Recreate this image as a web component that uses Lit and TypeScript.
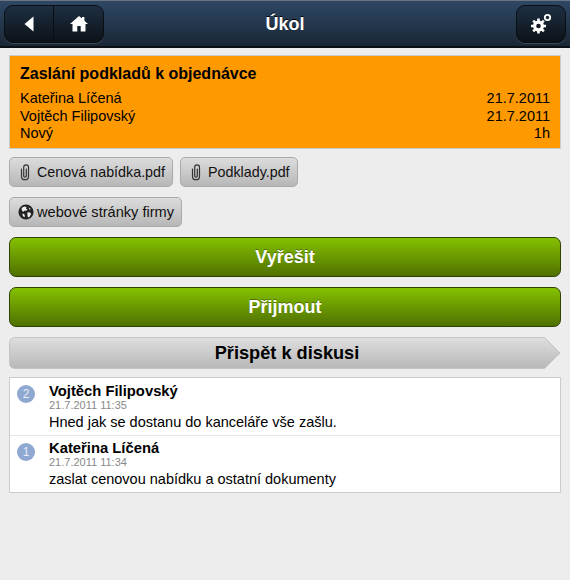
import { LitElement, html, css, svg } from "lit";
import { customElement } from "lit/decorators.js";

const clip = svg`<svg class="ic" width="14" height="18" viewBox="0 0 14 18"><path d="M3.500 6v7.400c0 4.400 7 4.400 7 0V4.200c0-3.200-4.800-3.200-4.800 0v8.800c0 1.500 2.600 1.500 2.600 0V6" fill="none" stroke="#333" stroke-width="1.200" stroke-linecap="round"/></svg>`;
const globe = svg`<svg class="ic" width="16" height="16" viewBox="0 0 18 18"><circle cx="9" cy="9" r="8.500" fill="#222"/><path d="M4 4.500l3-1.600 2.600.4-.6 1.800 1.700 1-1.600 1.600-2.400-.2-.6 1.600-1.600-1.400zM10.600 9.400l3 .2 1.200 1.600-2 3.400-1.600.6-.6-3zM12 3.600l2.400 2-1.400.8zM5 10.600l2.200 1 .6 2.400-1 1-1.600-2z" fill="#eee"/></svg>`;

@customElement("app-root")
export class AppRoot extends LitElement {
  static styles = css`
    :host { display: block; width: 570px; height: 580px; overflow: hidden; background: #ededed; font-family: "Liberation Sans", Arial, sans-serif; color: #000; }
    .hdr { height: 48px; box-sizing: border-box; display: flex; align-items: center; justify-content: space-between; padding: 1px 4px 0; border-top: 1px solid #6b7480; border-bottom: 2px solid #0c1014; background: linear-gradient(#2e4764, #1a2735); position: relative; }
    .hdr h1 { position: absolute; left: 0; right: 0; top: 13px; margin: 0; text-align: center; font-size: 18px; line-height: 20px; font-weight: bold; color: #fff; text-shadow: 0 -1px 0 #000; }
    .grp { display: flex; height: 38px; border: 1px solid #0b0f14; border-radius: 9px; background: linear-gradient(#1e2f42, #0c1218); box-shadow: 0 1px 0 #3b4b5d; box-sizing: border-box; position: relative; }
    .grp div { display: flex; align-items: center; justify-content: center; height: 100%; }
    .back { width: 48px; border-right: 1px solid #0a0d11; }
    .home { width: 49px; }
    .set { width: 48px; }
    .body { padding: 7px 9px 0; display: flex; flex-direction: column; }
    .info { height: 94px; box-sizing: border-box; border: 1px solid #ccc; background: #ff9900; padding: 9px 10px; font-size: 14.500px; line-height: 17.500px; }
    .info h2 { margin: 0 0 7px; font-size: 16px; line-height: 18px; font-weight: bold; }
    .row { display: flex; justify-content: space-between; }
    .atts { display: flex; gap: 7px; margin-top: 8px; }
    .atts.two { margin-top: 10px; }
    .att { height: 30px; box-sizing: border-box; display: flex; align-items: center; gap: 5px; padding: 0 7px 0 8px; border: 1px solid #aaa; border-radius: 5px; background: linear-gradient(#dcdcdc, #b7b7b7); font-size: 14.300px; color: #111; }
    .att.web { gap: 3px; font-size: 14.600px; }
    .att .ic { flex: none; }
    .big { height: 40px; box-sizing: border-box; margin-top: 10px; display: flex; align-items: center; justify-content: center; border: 1px solid #2e4300; border-radius: 7px; background: linear-gradient(#85c100, #4f7000); color: #fff; font-size: 18px; font-weight: bold; text-shadow: 0 -1px 0 rgba(0,0,0,.35); }
    .arrow { height: 32px; margin-top: 10px; position: relative; display: flex; align-items: center; justify-content: center; font-size: 18.200px; font-weight: bold; }
    .arrow svg { position: absolute; left: 0; top: 0; }
    .arrow span { position: relative; left: 2px; }
    .list { margin-top: 8px; border: 1px solid #ccc; background: #fff; height: 116px; box-sizing: border-box; }
    .it { height: 57px; box-sizing: border-box; display: flex; padding: 4px 7px; gap: 14px; }
    .it + .it { border-top: 1px solid #e6e6e6; padding-top: 3px; }
    .n { flex: none; width: 18px; height: 18px; margin-top: 3px; border-radius: 50%; background: #8fa8d2; color: #e8edf6; font-size: 12px; line-height: 18px; text-align: center; }
    .it + .it .n { margin-top: 4px; }
    .who { font-size: 14.800px; line-height: 15px; padding-top: 2px; font-weight: bold; }
    .dt { font-size: 11px; line-height: 12px; color: #888; }
    .tx { font-size: 14.500px; line-height: 17px; margin-top: 3px; }
  `;
  render() {
    return html`
      <div class="hdr">
        <h1>Úkol</h1>
        <div class="grp">
          <div class="back"><svg width="12" height="16" viewBox="0 0 12 16"><path d="M10.500.5V15.500L1.500 8z" fill="#fff"/></svg></div>
          <div class="home"><svg width="20" height="18" viewBox="0 0 20 18"><path d="M10 1l3 2.600V2h2.400v3.700L19 9h-2.500v7.500h-4.800V11H8.300v5.500H3.500V9H1z" fill="#fff"/></svg></div>
        </div>
        <div class="grp">
          <div class="set"><svg width="22" height="22" viewBox="0 0 22 22"><g fill="#fff"><circle cx="8.500" cy="13" r="5.500"/><g stroke="#fff" stroke-width="2.600"><path d="M8.500 5.500v15M1 13h15M3.200 7.700l10.600 10.600M13.800 7.700L3.200 18.300"/></g></g><circle cx="8.500" cy="13" r="2.300" fill="#121a24"/><circle cx="17.500" cy="4.500" r="2.700" fill="none" stroke="#fff" stroke-width="1.800"/></svg></div>
        </div>
      </div>
      <div class="body">
        <div class="info">
          <h2>Zaslání podkladů k objednávce</h2>
          <div class="row"><span>Kateřina Líčená</span><span>21.7.2011</span></div>
          <div class="row"><span>Vojtěch Filipovský</span><span>21.7.2011</span></div>
          <div class="row"><span>Nový</span><span>1h</span></div>
        </div>
        <div class="atts">
          <div class="att">${clip}<span>Cenová nabídka.pdf</span></div>
          <div class="att">${clip}<span>Podklady.pdf</span></div>
        </div>
        <div class="atts two">
          <div class="att web">${globe}<span>webové stránky firmy</span></div>
        </div>
        <div class="big">Vyřešit</div>
        <div class="big">Přijmout</div>
        <div class="arrow">
          <svg width="552" height="32" viewBox="0 0 552 32"><defs><linearGradient id="g" x1="0" y1="0" x2="0" y2="1"><stop offset="0" stop-color="#dedede"/><stop offset="1" stop-color="#b8b8b8"/></linearGradient></defs><path d="M5.500.5H535.500L551 16 535.500 31.500H5.500a5 5 0 0 1-5-5V5.500a5 5 0 0 1 5-5z" fill="url(#g)" stroke="#c4c4c4"/></svg>
          <span>Přispět k diskusi</span>
        </div>
        <div class="list">
          <div class="it"><div class="n">2</div><div><div class="who">Vojtěch Filipovský</div><div class="dt">21.7.2011 11:35</div><div class="tx">Hned jak se dostanu do kanceláře vše zašlu.</div></div></div>
          <div class="it"><div class="n">1</div><div><div class="who">Kateřina Líčená</div><div class="dt">21.7.2011 11:34</div><div class="tx">zaslat cenovou nabídku a ostatní dokumenty</div></div></div>
        </div>
      </div>
    `;
  }
}
